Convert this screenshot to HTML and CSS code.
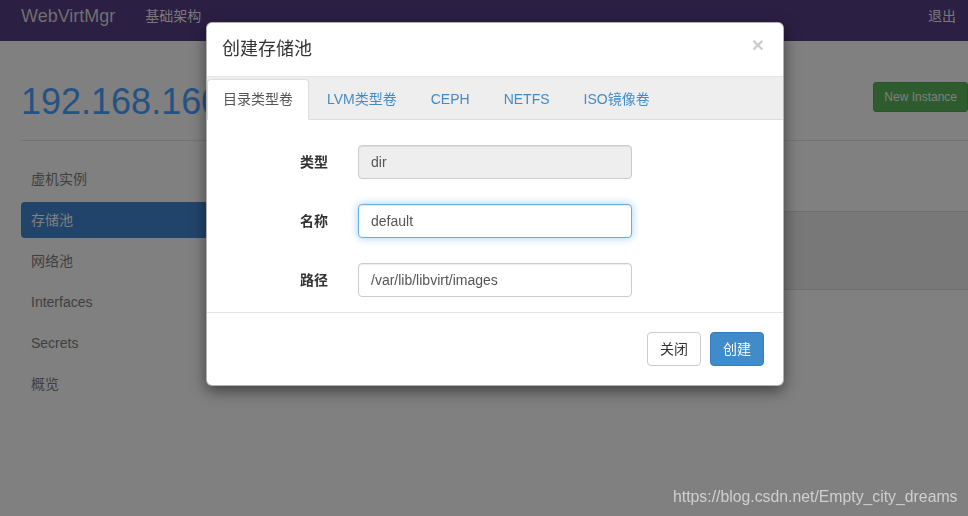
FILE: index.html
```html
<!DOCTYPE html>
<html lang="zh-CN">
<head>
<meta charset="utf-8">
<title>WebVirtMgr - 存储池</title>
<link rel="stylesheet" href="styles.css">
</head>
<body>
<nav class="navbar">
  <span class="brand">WebVirtMgr</span>
  <span class="nav-link">基础架构</span>
  <span class="nav-right">退出</span>
</nav>

<div class="container">
  <div class="page-header">
    <h1 class="host">192.168.160</h1>
    <span class="btn-new">New Instance</span>
  </div>
  <div class="layout">
    <ul class="side-nav">
      <li class="side-item">虚机实例</li>
      <li class="side-item active">存储池</li>
      <li class="side-item">网络池</li>
      <li class="side-item">Interfaces</li>
      <li class="side-item">Secrets</li>
      <li class="side-item">概览</li>
    </ul>
    <div class="main">
      <div class="table-head"></div>
      <div class="table-row"></div>
    </div>
  </div>
</div>

<div class="modal">
  <div class="modal-header">
    <h4 class="modal-title">创建存储池</h4>
    <span class="close">×</span>
  </div>
  <ul class="tabs">
    <li class="tab active">目录类型卷</li>
    <li class="tab">LVM类型卷</li>
    <li class="tab">CEPH</li>
    <li class="tab">NETFS</li>
    <li class="tab">ISO镜像卷</li>
  </ul>
  <div class="modal-body">
    <label class="form-label">类型</label>
    <div class="input disabled">dir</div>
    <label class="form-label">名称</label>
    <div class="input focus">default</div>
    <label class="form-label">路径</label>
    <div class="input">/var/lib/libvirt/images</div>
  </div>
  <div class="modal-footer">
    <span class="btn btn-default">关闭</span>
    <span class="btn btn-primary">创建</span>
  </div>
</div>

<div class="watermark">https://blog.csdn.net/Empty_city_dreams</div>
</body>
</html>
```

FILE: styles.css
```css
/* Page behind the modal is drawn with its dimmed (backdrop) colours */
* {
  box-sizing: border-box;
}

html, body {
  margin: 0;
  padding: 0;
  height: 100%;
  overflow: hidden;
}

body {
  font-family: "Liberation Sans", "Noto Sans CJK SC", sans-serif;
  font-size: 14px;
  line-height: 20px;
  color: #333;
  background: #808080;
}

/* ---------- navbar ---------- */
.navbar {
  height: 41px;
  background: #2c1f44;
  display: flex;
  align-items: flex-start;
  padding: 6px 12px 0 21px;
}

.brand {
  font-size: 18px;
  line-height: 20px;
  color: #707070;
}

.nav-link {
  margin-left: 30px;
  color: #7a7a7a;
  line-height: 20px;
}

.nav-right {
  margin-left: auto;
  color: #7a7a7a;
  line-height: 20px;
}

/* ---------- page ---------- */
.container {
  padding-left: 21px;
}

.page-header {
  display: flex;
  justify-content: space-between;
  align-items: flex-start;
  padding-top: 41px;
  padding-bottom: 18px;
  border-bottom: 1px solid #747474;
}

.host {
  margin: 0;
  font-size: 36px;
  line-height: 40px;
  font-weight: normal;
  color: #245283;
  white-space: nowrap;
}

.btn-new {
  display: block;
  padding: 5px 10px;
  font-size: 12px;
  line-height: 18px;
  color: #808080;
  background: #2e5c2e;
  border: 1px solid #265726;
  border-radius: 3px;
  white-space: nowrap;
}

.layout {
  display: flex;
  gap: 20px;
}

.side-nav {
  list-style: none;
  margin: 20px 0 0;
  padding: 0;
  width: 220px;
  display: flex;
  flex-direction: column;
  gap: 5px;
}

.side-item {
  padding: 8px 10px;
  line-height: 20px;
  color: #3f3f3f;
  border-radius: 4px;
}

.side-item.active {
  background: #21456a;
  color: #808080;
}

.main {
  flex: 1;
  padding-top: 20px;
}

.table-head {
  height: 51px;
  border-bottom: 1px solid #6f6f6f;
}

.table-row {
  height: 78px;
  background: #787878;
  border-bottom: 1px solid #6f6f6f;
}

/* ---------- modal ---------- */
.modal {
  position: fixed;
  top: 22px;
  left: 206px;
  width: 578px;
  background: #fff;
  border: 1px solid rgba(0, 0, 0, 0.3);
  border-radius: 6px;
  box-shadow: 0 5px 15px rgba(0, 0, 0, 0.5);
}

.modal-header {
  display: flex;
  justify-content: space-between;
  padding: 14px 15px 15px;
  border-bottom: 1px solid #e5e5e5;
}

.modal-title {
  margin: 0;
  font-size: 18px;
  line-height: 24px;
  font-weight: normal;
  color: #333;
}

.close {
  font-size: 21px;
  font-weight: bold;
  line-height: 20px;
  margin-top: -2px;
  margin-right: 4px;
  color: #000;
  opacity: 0.2;
}

.tabs {
  list-style: none;
  margin: 0;
  padding: 2px 0 0;
  display: flex;
  background: #eee;
  border-bottom: 1px solid #ddd;
}

.tab {
  margin-right: 2px;
  margin-bottom: -1px;
  padding: 10px 15px;
  line-height: 19px;
  color: #428bca;
  border: 1px solid transparent;
  border-radius: 4px 4px 0 0;
}

.tab.active {
  background: #fff;
  color: #555;
  border-color: #ddd #ddd transparent;
}

.modal-body {
  display: grid;
  grid-template-columns: 101px 274px;
  column-gap: 30px;
  row-gap: 25px;
  align-items: center;
  padding: 25px 20px 15px;
}

.form-label {
  text-align: right;
  font-weight: bold;
  color: #333;
}

.input {
  height: 34px;
  padding: 6px 12px;
  line-height: 20px;
  color: #555;
  background: #fff;
  border: 1px solid #ccc;
  border-radius: 4px;
  box-shadow: inset 0 1px 1px rgba(0, 0, 0, 0.075);
}

.input.disabled {
  background: #eee;
}

.input.focus {
  border-color: #66afe9;
  box-shadow: inset 0 1px 1px rgba(0, 0, 0, 0.075), 0 0 8px rgba(102, 175, 233, 0.6);
}

.modal-footer {
  display: flex;
  justify-content: flex-end;
  gap: 9px;
  padding: 19px 19px 19px 20px;
  border-top: 1px solid #e5e5e5;
}

.btn {
  display: block;
  padding: 6px 12px;
  line-height: 20px;
  border: 1px solid transparent;
  border-radius: 4px;
}

.btn-default {
  color: #333;
  background: #fff;
  border-color: #ccc;
}

.btn-primary {
  color: #fff;
  background: #428bca;
  border-color: #357ebd;
}

/* ---------- watermark ---------- */
.watermark {
  position: fixed;
  left: 673px;
  top: 488px;
  font-size: 15.8px;
  line-height: 18px;
  color: #cfcfcf;
  white-space: nowrap;
}
```
